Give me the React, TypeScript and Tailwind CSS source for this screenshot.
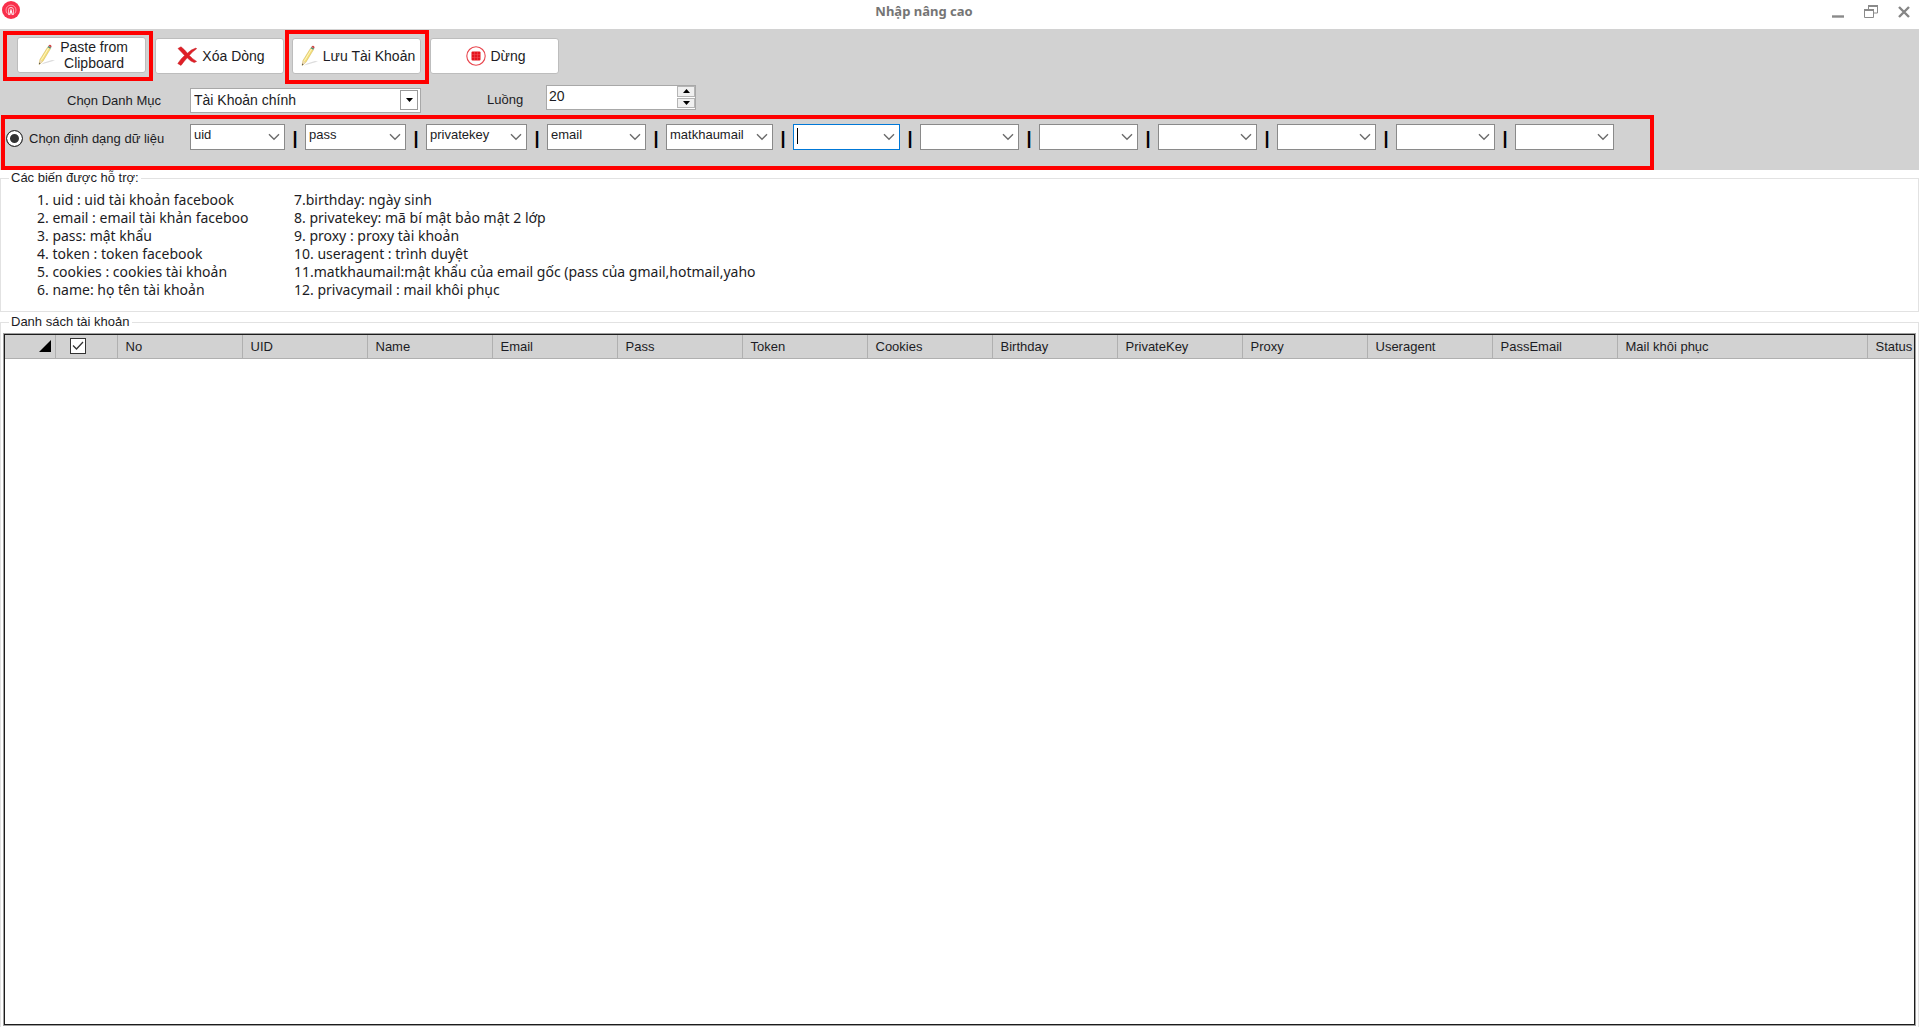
import React from 'react';
import clsx from 'clsx';

const FORMAT_FIELDS = [
  { value: 'uid', width: 'w-[95px]' },
  { value: 'pass', width: 'w-[101px]' },
  { value: 'privatekey', width: 'w-[101px]' },
  { value: 'email', width: 'w-[99px]' },
  { value: 'matkhaumail', width: 'w-[107px]' },
  { value: '', width: 'w-[107px]', active: true },
  { value: '', width: 'w-[99px]' },
  { value: '', width: 'w-[99px]' },
  { value: '', width: 'w-[99px]' },
  { value: '', width: 'w-[99px]' },
  { value: '', width: 'w-[99px]' },
  { value: '', width: 'w-[99px]' },
];

const VARIABLES_LEFT = [
  '1. uid : uid tài khoản facebook',
  '2. email : email tài khản faceboo',
  '3. pass: mật khẩu',
  '4. token : token facebook',
  '5. cookies : cookies tài khoản',
  '6. name: họ tên tài khoản',
];

const VARIABLES_RIGHT = [
  '7.birthday: ngày sinh',
  '8. privatekey: mã bí mật bảo mật 2 lớp',
  '9. proxy : proxy tài khoản',
  '10. useragent : trình duyệt',
  '11.matkhaumail:mật khẩu của email gốc (pass của gmail,hotmail,yaho',
  '12. privacymail : mail khôi phục',
];

const COLUMNS = [
  'No',
  'UID',
  'Name',
  'Email',
  'Pass',
  'Token',
  'Cookies',
  'Birthday',
  'PrivateKey',
  'Proxy',
  'Useragent',
  'PassEmail',
];

const PencilIcon = () => (
  <svg width="18" height="22" viewBox="0 0 18 22" aria-hidden="true">
    <path d="M3 20.5 L17 16.5 L14 16 L6 18.5 Z" fill="#dcdcdc" />
    <path d="M1 20.5 L2 15.5 L9.6 3.2 L12.4 4.8 L4.8 17.4 Z" fill="#f5e07c" stroke="#cdb050" strokeWidth="0.5" />
    <path d="M3.4 15.8 L10.6 4" stroke="#fff8c4" strokeWidth="1" />
    <path d="M1 20.5 L2 15.5 L4.8 17.4 Z" fill="#ecd9b4" />
    <path d="M1 20.5 L1.4 18.6 L2.5 19.3 Z" fill="#333" />
    <path d="M9.6 3.2 L10.4 1.9 L13.2 3.5 L12.4 4.8 Z" fill="#4f8f72" />
    <path d="M10.4 1.9 Q11.4 0 12.9 1 Q14.1 2 13.2 3.5 Z" fill="#cf4a4a" />
  </svg>
);

const DeleteIcon = () => (
  <svg width="21" height="20" viewBox="0 0 21 20" aria-hidden="true">
    <path
      d="M1 2.5 L4 0.8 Q7.5 3.5 10.4 7.2 Q14 3.4 19 2 L19.6 2.8 Q15.5 5.5 12.3 9.4 Q15.5 13 19.6 15.4 L17.2 16.6 Q13 15 10.2 11.8 Q7 15.4 4 19.4 L0.8 17.6 Q3.5 13 7.6 9.4 Q4.5 6 1 2.5 Z"
      fill="#e01f26"
      stroke="#c01a20"
      strokeWidth="0.5"
    />
  </svg>
);

const StopIcon = () => (
  <svg width="20" height="20" viewBox="0 0 20 20" aria-hidden="true">
    <circle cx="10" cy="10" r="9.2" fill="#fff" stroke="#e8474f" strokeWidth="1.1" />
    <rect x="5.5" y="5.5" width="9" height="9" rx="1" fill="#e5161f" />
    <path d="M8.5 6 V14 M11.5 6 V14 M6 8.5 H14 M6 11.5 H14" stroke="#f0525a" strokeWidth="0.5" />
  </svg>
);

const AppLogo = () => (
  <svg width="18" height="18" viewBox="0 0 18 18" aria-hidden="true">
    <circle cx="9" cy="9" r="9" fill="#f92f4b" />
    <path d="M5.4 12.6 A5 5 0 1 1 12.6 12.6" fill="none" stroke="#ff9aa8" strokeWidth="1" />
    <path d="M6.6 14 V8.6 Q6.6 6.4 9 6.4 Q11.4 6.4 11.4 8.6 V14" fill="none" stroke="#ffc9d0" strokeWidth="1" />
    <path d="M7.6 14 L9 9 L10.4 14" fill="none" stroke="#fff" strokeWidth="1.1" />
  </svg>
);

interface ToolButtonProps {
  icon: React.ReactNode;
  children: React.ReactNode;
}

const ToolButton: React.FC<ToolButtonProps> = ({ icon, children }) => (
  <button
    type="button"
    className="flex h-9 w-[129px] items-center justify-center gap-1 rounded-[3px] border border-[#bdbdbd] bg-white pl-[3px] text-[14px] leading-4"
  >
    {icon}
    <span>{children}</span>
  </button>
);

interface FormatSelectProps {
  value: string;
  label: string;
  width: string;
  active?: boolean;
}

const FormatSelect: React.FC<FormatSelectProps> = ({ value, label, width, active }) => (
  <div className={clsx('relative', width)}>
    <select
      aria-label={label}
      defaultValue={value}
      className={clsx(
        'block h-[26px] w-full appearance-none border bg-white pb-1 pl-[3px] pr-5 text-[13px] leading-5 outline-none',
        active ? 'border-[#0078d7]' : 'border-[#8a8a8a]'
      )}
    >
      <option value={value}>{value}</option>
    </select>
    {active && <span className="absolute left-1 top-1 h-4 w-px bg-black" />}
    <svg className="pointer-events-none absolute right-[5px] top-[9px]" width="12" height="8" viewBox="0 0 12 8" aria-hidden="true">
      <path d="M1 1.2 L6 6.2 L11 1.2" fill="none" stroke="#6b6b6b" strokeWidth="1.4" />
    </svg>
  </div>
);

export default function App() {
  return (
    <div className="flex min-h-screen flex-col bg-white font-['Liberation_Sans',Arial,sans-serif] text-[13px] text-[#1c1c24]">
      <header className="grid h-[29px] grid-cols-[1fr_auto_1fr] items-start pl-[2px] pr-[9px] pt-[1px]">
        <AppLogo />
        <h1 className="pr-16 font-['Noto_Sans',sans-serif] text-[13px] font-bold leading-5 text-[#757575]">Nhập nâng cao</h1>
        <div className="flex items-center justify-end gap-5 pt-1">
          <button type="button" aria-label="Minimize">
            <svg width="12" height="13" viewBox="0 0 12 13">
              <path d="M0 11.5 H12" stroke="#8a8a8a" strokeWidth="2.4" />
            </svg>
          </button>
          <button type="button" aria-label="Restore">
            <svg width="14" height="13" viewBox="0 0 14 13">
              <path d="M4.5 4 V1 H13.5 V8 H10" fill="none" stroke="#8a8a8a" />
              <path d="M4 1 H14" stroke="#8a8a8a" strokeWidth="2" />
              <path d="M0.5 4.5 H9.5 V12.5 H0.5 Z" fill="#fff" stroke="#8a8a8a" />
              <path d="M0 5 H10" stroke="#8a8a8a" strokeWidth="2" />
            </svg>
          </button>
          <button type="button" aria-label="Close">
            <svg width="12" height="12" viewBox="0 0 12 12">
              <path d="M1 1 L11 11 M11 1 L1 11" stroke="#858585" strokeWidth="2.4" />
            </svg>
          </button>
        </div>
      </header>

      <section className="bg-[#d2d2d2]">
        <div className="flex h-14 items-start pl-[3px]">
          <div className="mt-[2px] w-[150px] border-4 border-[#ff0000] pb-1 pl-[10px] pt-[2px]">
            <ToolButton icon={<PencilIcon />}>
              Paste from
              <br />
              Clipboard
            </ToolButton>
          </div>
          <div className="ml-[2px] mt-[9px]">
            <ToolButton icon={<DeleteIcon />}>Xóa Dòng</ToolButton>
          </div>
          <div className="ml-[1px] mt-[1px] w-[144px] border-4 border-[#ff0000] pb-[6px] pl-[3px] pt-1">
            <ToolButton icon={<PencilIcon />}>Lưu Tài Khoản</ToolButton>
          </div>
          <div className="ml-[1px] mt-[9px]">
            <ToolButton icon={<StopIcon />}>Dừng</ToolButton>
          </div>
        </div>

        <div className="flex h-[30px] items-start">
          <label htmlFor="category" className="w-[190px] pl-[67px] pt-2 leading-4">
            Chọn Danh Mục
          </label>
          <div className="relative mt-[3px] w-[231px]">
            <select
              id="category"
              className="block h-[25px] w-full appearance-none border border-[#a8a8a8] bg-white pb-[2px] pl-[3px] pr-6 text-[14px] leading-5 outline-none"
            >
              <option>Tài Khoản chính</option>
            </select>
            <span className="pointer-events-none absolute right-[3px] top-[2px] flex h-5 w-[18px] items-center justify-center border border-[#9a9a9a] bg-white">
              <svg width="7" height="4" viewBox="0 0 7 4" aria-hidden="true">
                <path d="M0 0 H7 L3.5 4 Z" fill="#000" />
              </svg>
            </span>
          </div>
          <label htmlFor="threads" className="w-[125px] pl-[66px] pt-[7px] leading-4">
            Luồng
          </label>
          <div className="relative w-[150px]">
            <input
              id="threads"
              type="number"
              defaultValue={20}
              className="block h-[25px] w-full border border-[#a8a8a8] bg-white pb-1 pl-[2px] text-[14px] leading-5 outline-none [appearance:textfield] [&::-webkit-inner-spin-button]:appearance-none"
            />
            <span className="absolute right-[1px] top-[1px] flex h-[22px] w-[18px] flex-col gap-px">
              <button type="button" tabIndex={-1} aria-label="Tăng" className="flex flex-1 items-center justify-center border border-[#b5b5b5] bg-[#f0f0f0]">
                <svg width="7" height="4" viewBox="0 0 7 4">
                  <path d="M0 4 H7 L3.5 0 Z" fill="#000" />
                </svg>
              </button>
              <button type="button" tabIndex={-1} aria-label="Giảm" className="flex flex-1 items-center justify-center border border-[#b5b5b5] bg-[#f0f0f0]">
                <svg width="7" height="4" viewBox="0 0 7 4">
                  <path d="M0 0 H7 L3.5 4 Z" fill="#000" />
                </svg>
              </button>
            </span>
          </div>
        </div>

        <div className="ml-[1px] flex h-[55px] w-[1653px] items-start border-4 border-[#ff0000] pt-[5px]">
          <label className="flex w-[185px] items-center gap-[6px] pl-[1px] pt-[6px] leading-4">
            <input
              type="radio"
              name="format"
              defaultChecked
              className="h-[17px] w-[17px] shrink-0 appearance-none rounded-full border border-[#333] bg-white checked:bg-[#333] checked:shadow-[inset_0_0_0_3px_#fff]"
            />
            Chọn định dạng dữ liệu
          </label>
          {FORMAT_FIELDS.map((field, i) => (
            <React.Fragment key={i}>
              {i > 0 && <span className="w-5 pt-[6px] text-center text-[18px] font-bold leading-4 text-black">|</span>}
              <FormatSelect value={field.value} label={`Trường ${i + 1}`} width={field.width} active={field.active} />
            </React.Fragment>
          ))}
        </div>
      </section>

      <fieldset className="h-[142px] border border-[#e2e2e2] pl-9">
        <legend className="-ml-7 px-[2px] leading-4">Các biến được hỗ trợ:</legend>
        <div className="flex gap-11 pt-[5px] font-['Noto_Sans',sans-serif] text-[14px] leading-[18px]">
          <ul className="w-[213px] whitespace-nowrap">
            {VARIABLES_LEFT.map((text) => (
              <li key={text}>{text}</li>
            ))}
          </ul>
          <ul className="whitespace-nowrap">
            {VARIABLES_RIGHT.map((text) => (
              <li key={text}>{text}</li>
            ))}
          </ul>
        </div>
      </fieldset>

      <fieldset className="mt-[2px] border border-b-0 border-[#e2e2e2] pl-[3px] pr-[3px]">
        <legend className="ml-[5px] px-[2px] leading-4">Danh sách tài khoản</legend>
        <div className="mb-[2px] mt-1 min-h-[calc(100vh-337px)] border border-[#1c1c1c] ring-1 ring-[#a0a0a0]">
          <table className="w-full table-fixed border-collapse text-left leading-4">
            <thead>
              <tr className="h-[23px] bg-[#d2d2d2]">
                <th className="w-[50px] border-b border-r border-[#b0b0b0]">
                  <svg className="ml-auto mr-1" width="12" height="12" viewBox="0 0 12 12" aria-hidden="true">
                    <path d="M12 0 V12 H0 Z" fill="#000" />
                  </svg>
                </th>
                <th className="w-[62px] border-b border-r border-[#b0b0b0] pl-[14px]">
                  <span className="relative block h-4 w-4">
                    <input
                      type="checkbox"
                      aria-label="Chọn tất cả"
                      defaultChecked
                      className="block h-4 w-4 appearance-none border border-[#333] bg-white"
                    />
                    <svg className="pointer-events-none absolute left-[2px] top-[3px]" width="12" height="10" viewBox="0 0 12 10" aria-hidden="true">
                      <path d="M1 4.5 L4.5 8 L11 1" fill="none" stroke="#333" strokeWidth="1.3" />
                    </svg>
                  </span>
                </th>
                {COLUMNS.map((name) => (
                  <th key={name} className="w-[125px] border-b border-r border-[#b0b0b0] pl-2 pt-[2px] font-normal">
                    {name}
                  </th>
                ))}
                <th className="w-[250px] border-b border-r border-[#b0b0b0] pl-2 pt-[2px] font-normal">Mail khôi phục</th>
                <th className="border-b border-[#b0b0b0] pl-2 pt-[2px] font-normal">Status</th>
              </tr>
            </thead>
          </table>
        </div>
      </fieldset>
    </div>
  );
}
